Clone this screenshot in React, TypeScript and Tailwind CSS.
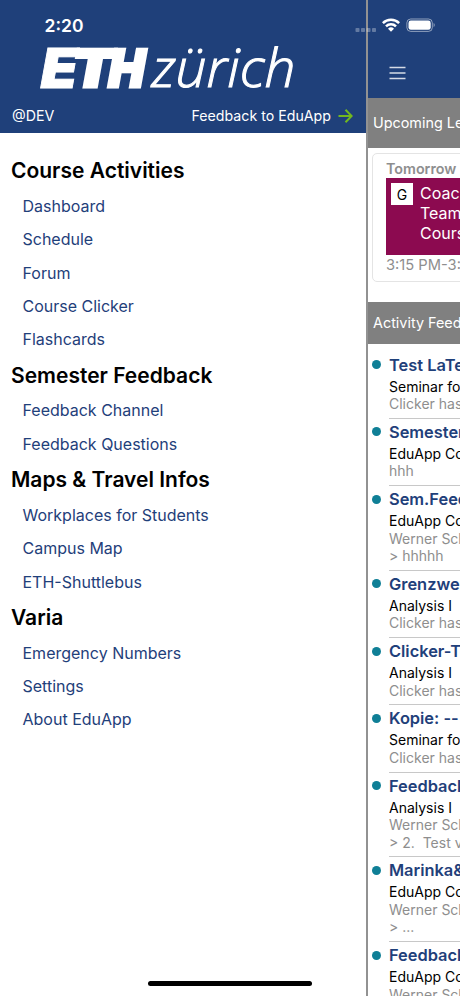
type MenuSection = { title: string; items: string[] };

type FeedEntry = { title: string; course: string; lines: string[] };

const menu: MenuSection[] = [
  { title: "Course Activities", items: ["Dashboard", "Schedule", "Forum", "Course Clicker", "Flashcards"] },
  { title: "Semester Feedback", items: ["Feedback Channel", "Feedback Questions"] },
  { title: "Maps & Travel Infos", items: ["Workplaces for Students", "Campus Map", "ETH-Shuttlebus"] },
  { title: "Varia", items: ["Emergency Numbers", "Settings", "About EduApp"] },
];

const feed: FeedEntry[] = [
  { title: "Test LaTeX", course: "Seminar for", lines: ["Clicker has"] },
  { title: "Semester", course: "EduApp Course", lines: ["hhh"] },
  { title: "Sem.Feedback", course: "EduApp Course", lines: ["Werner Sch", "> hhhhh"] },
  { title: "Grenzwert", course: "Analysis I", lines: ["Clicker has"] },
  { title: "Clicker-Test", course: "Analysis I", lines: ["Clicker has"] },
  { title: "Kopie: --", course: "Seminar for", lines: ["Clicker has"] },
  { title: "Feedback", course: "Analysis I", lines: ["Werner Sch", "> 2.  Test v"] },
  { title: "Marinka&", course: "EduApp Course", lines: ["Werner Sch", "> ..."] },
  { title: "Feedback", course: "EduApp Course", lines: ["Werner Sch", "> ..."] },
];

function StatusBar() {
  return (
    <div className="absolute inset-x-0 top-0 z-10 h-12 text-white">
      <span className="absolute left-[44.5px] top-[14px] text-[17.5px] leading-[24px] font-semibold">2:20</span>
      <svg className="absolute left-[355px] top-[16px]" width="82" height="20" viewBox="0 0 82 20" fill="none">
        <g fill="#fff" opacity="0.3">
          <rect x="0.5" y="12" width="4" height="4" rx="0.8" />
          <rect x="6" y="12" width="4" height="4" rx="0.8" />
          <rect x="11.5" y="12" width="4" height="4" rx="0.8" />
          <rect x="17" y="12" width="4" height="4" rx="0.8" />
        </g>
        <g stroke="#fff" strokeWidth="2.5">
          <path d="M27.9 7.1a11.4 11.4 0 0 1 16.2 0" />
          <path d="M31 10.3a7 7 0 0 1 10 0" />
        </g>
        <path d="M33 12.7a4.3 4.3 0 0 1 6 0L36 15.8z" fill="#fff" />
        <rect x="51.9" y="3" width="25.4" height="12.4" rx="3.8" stroke="#fff" strokeOpacity="0.5" />
        <rect x="53.5" y="4.6" width="22.2" height="9.2" rx="2.4" fill="#fff" />
        <path d="M78.6 7.1c1.5.7 1.5 3.5 0 4.2z" fill="#fff" fillOpacity="0.5" />
      </svg>
    </div>
  );
}

function Logo() {
  return (
    <svg className="block" width="366" height="98" viewBox="0 0 366 98" fill="#fff" stroke="#fff">
      <g transform="translate(40.7 87.7) skewX(-10.4)" fontFamily="Inter, sans-serif" fontWeight="900">
        <text x="-3" y="0" fontSize="55" strokeWidth="0.8" textLength="37" lengthAdjust="spacingAndGlyphs">E</text>
        <text x="28.8" y="-1.1" fontSize="52" strokeWidth="3" textLength="41" lengthAdjust="spacingAndGlyphs">T</text>
        <text x="65" y="-1.1" fontSize="52" strokeWidth="3" textLength="36" lengthAdjust="spacingAndGlyphs">H</text>
      </g>
      <text
        x="151.5"
        y="87.3"
        fontFamily="'Open Sans', sans-serif"
        fontStyle="italic"
        fontWeight="300"
        fontSize="52.5"
        strokeWidth="1"
        textLength="144"
        lengthAdjust="spacingAndGlyphs"
      >
        zürich
      </text>
    </svg>
  );
}

function Drawer() {
  return (
    <aside className="w-[366px] shrink-0 bg-white">
      <header className="h-[133px] bg-[#1f407a] text-white">
        <Logo />
        <div className="flex h-[36px] items-center justify-between pl-[12px] pr-[13px] text-[14.2px]">
          <span>@DEV</span>
          <span className="flex items-center gap-[7px]">
            Feedback to EduApp
            <svg width="15" height="14" viewBox="0 0 15 14" fill="none" stroke="#72b81f" strokeWidth="2">
              <path d="M0.5 7h13M7.5 0.8 13.6 7l-6.1 6.2" />
            </svg>
          </span>
        </div>
      </header>
      <nav className="pt-[19.4px]">
        {menu.map((section) => (
          <section key={section.title}>
            <h2 className="h-[37.7px] pl-[11px] text-[21px] leading-[37.7px] font-semibold text-black">{section.title}</h2>
            {section.items.map((item) => (
              <a key={item} className="block h-[33.35px] pl-[22.5px] text-[16px] leading-[33.35px] text-[#1f407a]">
                {item}
              </a>
            ))}
          </section>
        ))}
      </nav>
    </aside>
  );
}

function LectureCard() {
  return (
    <div className="mt-[5px] ml-[4px] h-[129px] w-[300px] rounded-[5px] border border-[#e4e4e4] pl-[13px] pt-[6px]">
      <p className="text-[14.3px] leading-[18px] font-semibold text-[#8e8e8e]">Tomorrow</p>
      <div className="flex h-[77px] gap-[7px] bg-[#8c0a50] pl-[5px] pt-[5px] text-white">
        <span className="flex size-[22px] items-center justify-center bg-white text-[14px] text-black">G</span>
        <p className="text-[16px] leading-[20px]">
          Coaching
          <br />
          Teams
          <br />
          Course
        </p>
      </div>
      <p className="text-[14.7px] leading-[20px] text-[#8e8e8e]">3:15 PM-3:45 PM</p>
    </div>
  );
}

function Dashboard() {
  return (
    <main className="w-[400px] shrink-0 border-l-2 border-[#929292] bg-white whitespace-nowrap">
      <header className="flex h-[98px] items-start bg-[#1f407a] pl-[21px] pt-[66px]">
        <svg width="17" height="14" viewBox="0 0 17 14" stroke="#d5dbe6" strokeWidth="1.3">
          <path d="M0.5 1.5h16M0.5 7h16M0.5 12.5h16" />
        </svg>
      </header>
      <h2 className="h-[50px] bg-[#808080] pl-[5px] text-[14.4px] leading-[49px] text-white">Upcoming Lectures</h2>
      <LectureCard />
      <h2 className="mt-[20px] h-[42px] bg-[#808080] pl-[5px] text-[14.4px] leading-[42px] text-white">Activity Feed</h2>
      <ul className="pt-[7.7px]">
        {feed.map((entry, i) => (
          <li key={i} className="flex">
            <span className="mt-[8.5px] ml-[4px] size-[9px] shrink-0 rounded-full bg-[#0f7f96]" />
            <div className="ml-[8px] flex-1 border-b border-[#c8c8c8] pb-[5.5px]">
              <h3 className="h-[26px] text-[16.4px] leading-[26px] font-semibold text-[#1f407a]">{entry.title}</h3>
              <p className="h-[17.4px] text-[14px] leading-[17.4px] text-black">{entry.course}</p>
              {entry.lines.map((line) => (
                <p key={line} className="h-[17.4px] text-[14px] leading-[17.4px] whitespace-pre text-[#8e8e8e]">
                  {line}
                </p>
              ))}
            </div>
          </li>
        ))}
      </ul>
    </main>
  );
}

export default function App() {
  return (
    <div className="relative flex h-[996px] w-[460px] overflow-hidden bg-white font-[Inter,sans-serif]">
      <StatusBar />
      <Drawer />
      <Dashboard />
      <div className="absolute bottom-[10px] left-[148px] h-[5px] w-[164px] rounded-full bg-black" />
    </div>
  );
}
